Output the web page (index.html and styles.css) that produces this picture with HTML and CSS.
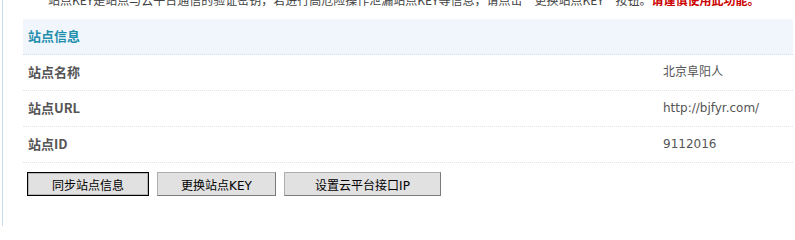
FILE: index.html
```html
<!DOCTYPE html>
<html lang="zh-CN">
<head>
<meta charset="utf-8">
<title>站点信息</title>
<link rel="stylesheet" href="styles.css">
</head>
<body>
<div class="frame">
  <p class="notice">站点KEY是站点与云平台通信的验证密钥，若进行高危险操作泄漏站点KEY等信息，请点击“更换站点KEY”按钮。<span class="warn">请谨慎使用此功能。</span></p>
  <div class="panel">
    <div class="head">站点信息</div>
    <div class="row"><span class="label">站点名称</span><span class="value">北京阜阳人</span></div>
    <div class="row"><span class="label">站点URL</span><span class="value">http://bjfyr.com/</span></div>
    <div class="row"><span class="label">站点ID</span><span class="value">9112016</span></div>
  </div>
  <div class="actions">
    <button class="btn btn-focus w1">同步站点信息</button>
    <button class="btn w2">更换站点KEY</button>
    <button class="btn w3">设置云平台接口IP</button>
  </div>
</div>
</body>
</html>
```
FILE: styles.css
```css
html, body {
  margin: 0;
  padding: 0;
  background: #fff;
}
body {
  font-family: "Noto Sans CJK SC", "DejaVu Sans", sans-serif;
  font-size: 12px;
  color: #555;
  height: 235px;
  overflow: hidden;
}
.frame {
  margin-left: 2px;
  border-left: 1px solid #c9dcef;
  height: 235px;
  padding-left: 20px;
  box-sizing: border-box;
}
.notice {
  margin: -9px 0 0 25px;
  height: 28px;
  line-height: 18px;
  font-size: 12px;
  color: #444;
  white-space: nowrap;
}
.warn {
  color: #c00;
  font-weight: bold;
}
.panel {
  width: 770px;
}
.head {
  height: 35px;
  line-height: 34px;
  background: #f1f6fc;
  border-bottom: 1px dotted #d4dde7;
  padding-left: 5px;
  font-size: 13px;
  font-weight: bold;
  color: #1f8fae;
}
.row {
  display: flex;
  height: 35px;
  line-height: 34px;
  border-bottom: 1px dotted #dde3ea;
  padding-left: 5px;
}
.label {
  width: 635px;
  font-size: 13px;
  font-weight: bold;
  color: #555;
}
.value {
  font-size: 12px;
  color: #555;
  font-family: "DejaVu Sans", "Noto Sans CJK SC", sans-serif;
}
.actions {
  display: flex;
  gap: 8px;
  margin-top: 9px;
  padding-left: 4px;
}
.btn {
  height: 24px;
  padding: 0;
  background: #e1e1e1;
  border: 1px solid #adadad;
  border-right-color: #7a7a7a;
  border-bottom-color: #7a7a7a;
  font-family: "DejaVu Sans", "Noto Sans CJK SC", sans-serif;
  font-size: 12px;
  color: #000;
}
.btn-focus {
  border: 1px solid #000;
  box-shadow: inset 0 0 0 1px #b5b5b5;
}
.w1 { width: 122px; }
.w2 { width: 119px; }
.w3 { width: 157px; }
```
